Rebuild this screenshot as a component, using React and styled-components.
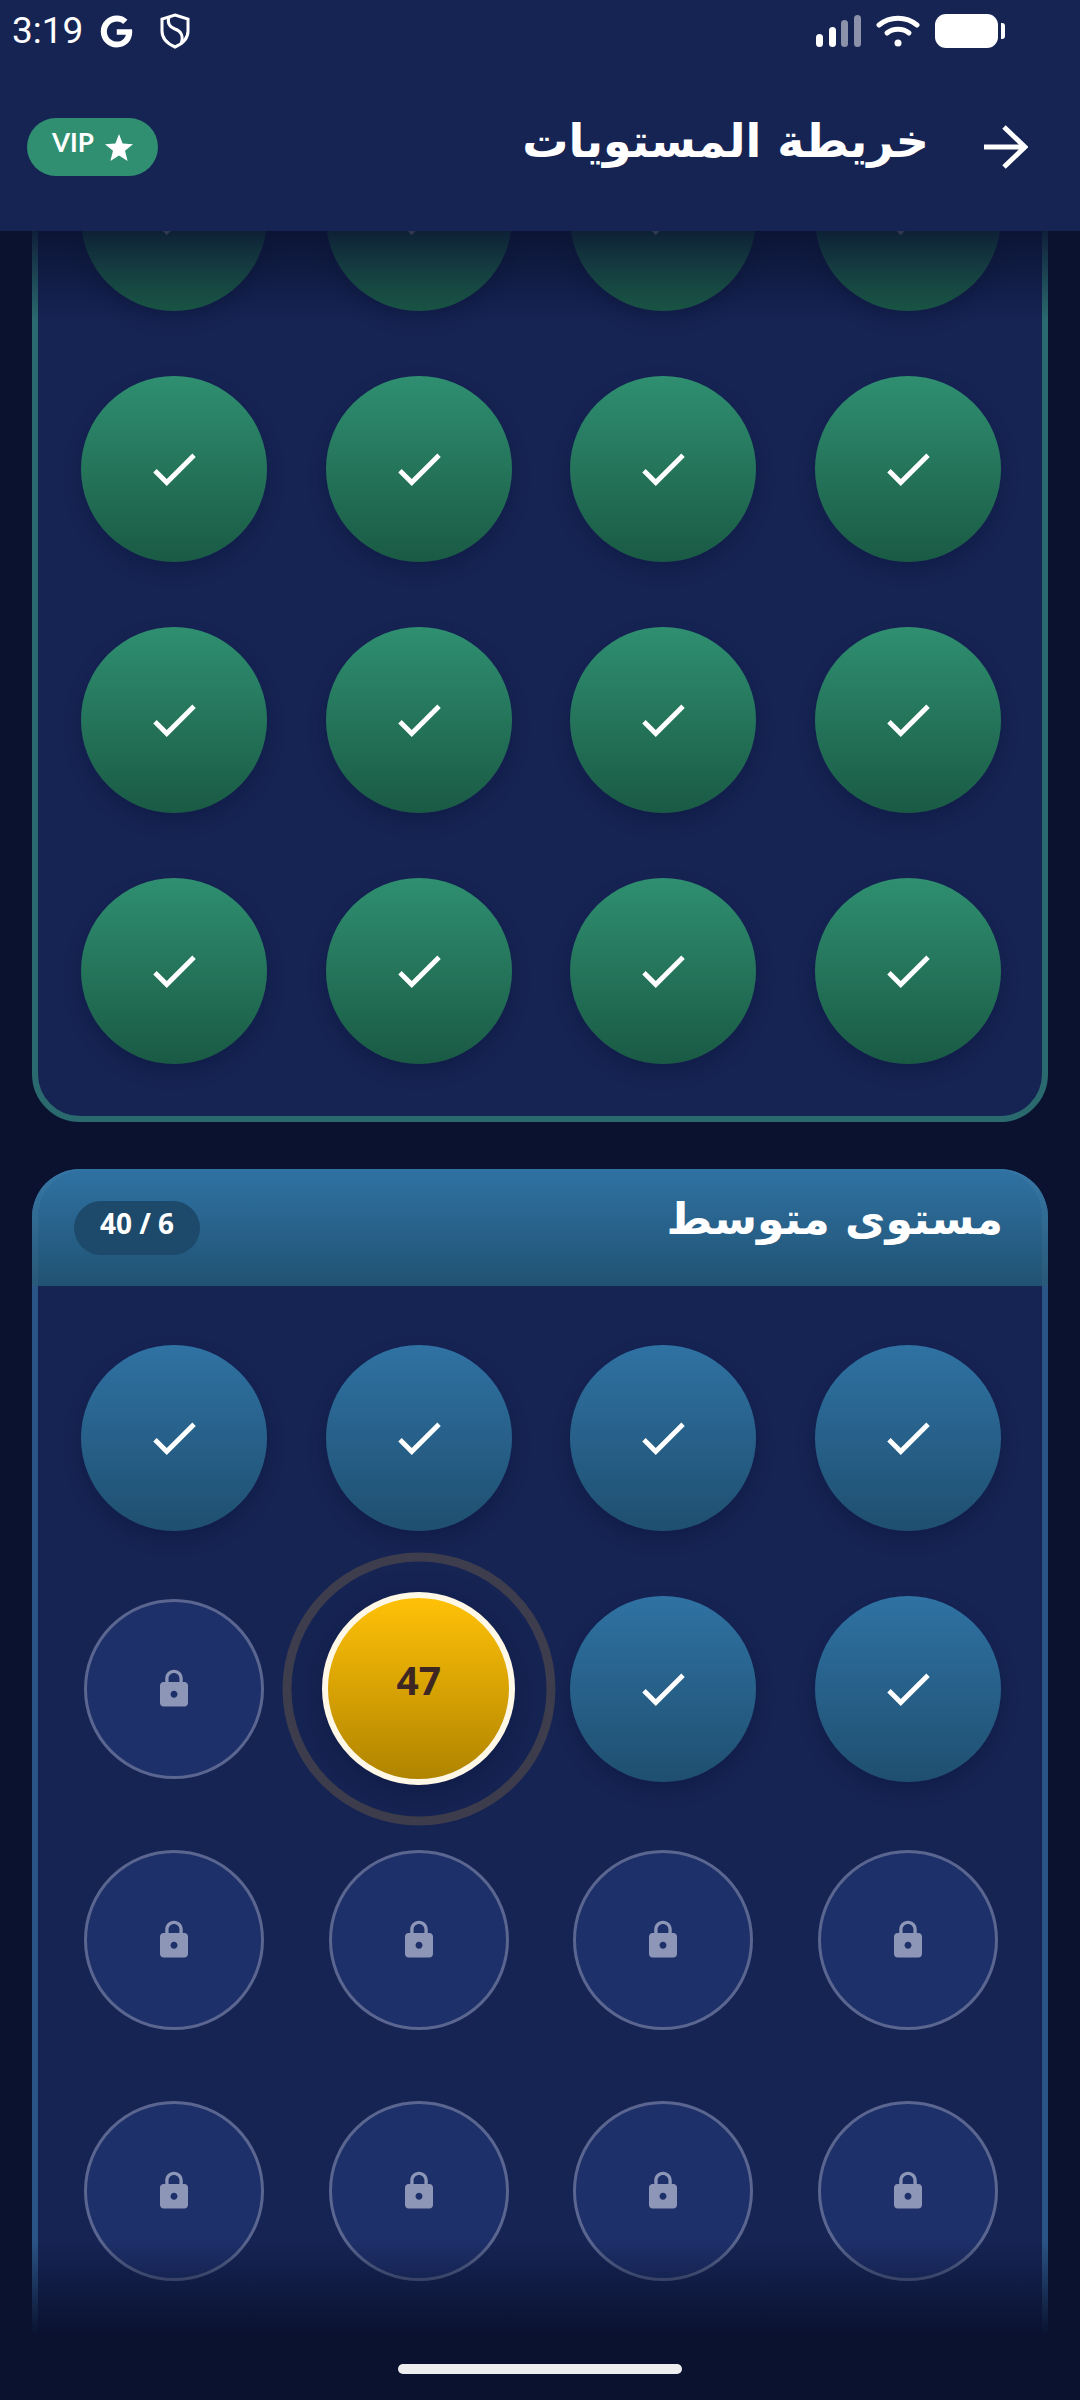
import React from 'react';
import styled, { createGlobalStyle } from 'styled-components';
import { FaGoogle } from 'react-icons/fa';

const GlobalStyle = createGlobalStyle`
  html, body { margin: 0; padding: 0; background: #0a1230; }
  body { font-family: "Noto Sans", "DejaVu Sans", sans-serif; }
`;

const Screen = styled.div`
  position: relative;
  width: 1080px;
  height: 2400px;
  overflow: hidden;
  background: #0a1230;
  display: flex;
  flex-direction: column;
`;

const TopBar = styled.header`
  position: relative;
  z-index: 3;
  flex: none;
  height: 231px;
  background: #162454;
`;

const StatusBar = styled.div`
  height: 62px;
  display: flex;
  align-items: center;
  padding: 0 75px 0 12px;
  color: #fff;
`;

const Time = styled.span`
  font-family: Roboto, sans-serif;
  font-size: 37px;
  line-height: 62px;
  width: 70px;
`;

const StatusLeft = styled.div`
  display: flex;
  align-items: center;
  gap: 18px;
  flex: 1;
`;

const StatusRight = styled.div`
  display: flex;
  align-items: center;
  gap: 15px;
`;

const Bars = styled.div`
  display: flex;
  align-items: flex-end;
  gap: 5.7px;
  height: 32px;
`;

const Bar = styled.span`
  width: 7px;
  height: ${p => p.$h}px;
  border-radius: 4px;
  background: ${p => p.$dim ? 'rgba(255,255,255,.5)' : '#fff'};
`;

const Battery = styled.div`
  position: relative;
  width: 63px;
  height: 34px;
  border-radius: 11px;
  background: #fff;
  margin-right: 7px;
  &::after {
    content: '';
    position: absolute;
    right: -7px;
    top: 9px;
    width: 4px;
    height: 16px;
    border-radius: 0 3px 3px 0;
    background: #fff;
  }
`;

const TitleRow = styled.div`
  height: 116px;
  margin-top: 27px;
  display: flex;
  align-items: center;
  padding: 0 52px 0 27px;
`;

const VipBadge = styled.div`
  width: 131px;
  height: 58px;
  border-radius: 29px;
  background: #2f8f70;
  color: #fff;
  display: flex;
  align-items: center;
  justify-content: center;
  gap: 11px;
  font-family: Lato, sans-serif;
  font-size: 26px;
  font-weight: 700;
`;

const VipText = styled.span`
  margin-bottom: 10px;
`;

const Title = styled.h1`
  flex: 1;
  margin: 0 55px 12px 0;
  text-align: right;
  color: #fff;
  font-size: 46px;
  font-weight: 700;
  font-family: "DejaVu Sans", "Noto Sans", sans-serif;
  direction: rtl;
`;

const List = styled.main`
  position: relative;
  z-index: 1;
  flex: 1;
  margin-top: -145px;
  padding: 0 32px;
  display: flex;
  flex-direction: column;
  gap: 47px;
`;

const Card = styled.section`
  border: 6px solid ${p => p.$border};
  border-radius: 48px;
  background: #162454;
  box-sizing: border-box;
  flex: none;
  ${p => p.$open ? 'border-bottom: 0; border-radius: 48px 48px 0 0;' : ''}
`;

const CardHead = styled.div`
  margin: -6px -6px 0;
  height: 117px;
  padding: 0 45px 0 42px;
  box-sizing: border-box;
  display: flex;
  align-items: center;
  justify-content: space-between;
  border-radius: 48px 48px 0 0;
  background: linear-gradient(180deg, #2f72a3, #215273);
  box-shadow: inset 6px 0 0 rgba(255,255,255,.04), inset -6px 0 0 rgba(255,255,255,.04);
`;

const CountPill = styled.div`
  width: 126px;
  height: 54px;
  border-radius: 27px;
  background: #1d4a6b;
  color: #fff;
  font-size: 28px;
  font-weight: 700;
  display: flex;
  align-items: center;
  justify-content: center;
  padding-bottom: 10px;
  box-sizing: border-box;
`;

const CardTitle = styled.h2`
  margin: 0 0 18px;
  color: #fff;
  font-size: 44px;
  font-weight: 700;
  font-family: "DejaVu Sans", "Noto Sans", sans-serif;
  direction: rtl;
`;

const Grid = styled.div`
  display: grid;
  grid-template-columns: repeat(4, 244.5px);
  grid-auto-rows: 251px;
  padding: ${p => p.$top}px 12px ${p => p.$bottom}px 14px;
`;

const Cell = styled.div`
  position: relative;
  display: flex;
  align-items: center;
  justify-content: center;
`;

const DoneCircle = styled.div`
  width: 186px;
  height: 186px;
  border-radius: 50%;
  display: flex;
  align-items: center;
  justify-content: center;
  background: linear-gradient(180deg, ${p => p.$from}, ${p => p.$to});
  box-shadow: 0 8px 18px rgba(8, 14, 44, .3);
`;

const LockCircle = styled.div`
  width: 180px;
  height: 180px;
  box-sizing: border-box;
  border-radius: 50%;
  display: flex;
  align-items: center;
  justify-content: center;
  background: #1e306a;
  border: 3px solid #5a668f;
`;

const Ring = styled.div`
  position: absolute;
  left: 50%;
  top: 50%;
  width: 273px;
  height: 273px;
  box-sizing: border-box;
  transform: translate(-50%, -50%);
  border-radius: 50%;
  border: 9px solid #3d3d4d;
`;

const CurrentCircle = styled.div`
  position: relative;
  width: 193px;
  height: 193px;
  box-sizing: border-box;
  border-radius: 50%;
  border: 6px solid #fff8e7;
  background: linear-gradient(180deg, #ffc107, #b08400);
  box-shadow: 0 10px 30px rgba(8, 14, 44, .35);
  display: flex;
  align-items: center;
  justify-content: center;
  color: #3e2723;
  font-size: 39px;
  font-weight: 700;
  padding-bottom: 18px;
`;

const FadeTop = styled.div`
  position: absolute;
  z-index: 2;
  left: 0;
  right: 0;
  top: 231px;
  height: 90px;
  background: linear-gradient(180deg, rgba(10,18,48,.85), rgba(10,18,48,0));
`;

const FadeBottom = styled.div`
  position: absolute;
  z-index: 2;
  left: 0;
  right: 0;
  bottom: 0;
  height: 160px;
  background: linear-gradient(180deg, rgba(10,18,48,0), #0a1230 59%);
`;

const HomeBar = styled.div`
  position: absolute;
  z-index: 4;
  left: 398px;
  bottom: 26px;
  width: 284px;
  height: 10px;
  border-radius: 5px;
  background: #eeeef0;
`;

const ShieldSvg = styled.svg`
  margin-left: 9px;
`;

const CheckIcon = () => (
  <svg width="58" height="58" viewBox="0 0 24 24" fill="#fff">
    <path d="M9 16.17 4.83 12l-1.41 1.41L9 19 21 7l-1.41-1.41z" />
  </svg>
);

const LockIcon = () => (
  <svg width="42" height="42" viewBox="0 0 24 24" fill="#8d96b6">
    <path d="M18 8h-1V6c0-2.76-2.24-5-5-5S7 3.24 7 6v2H6c-1.1 0-2 .9-2 2v10c0 1.1.9 2 2 2h12c1.1 0 2-.9 2-2V10c0-1.1-.9-2-2-2zm-6 9c-1.1 0-2-.9-2-2s.9-2 2-2 2 .9 2 2-.9 2-2 2zm3.1-9H8.9V6c0-1.71 1.39-3.1 3.1-3.1 1.71 0 3.1 1.39 3.1 3.1v2z" />
  </svg>
);

const StarIcon = () => (
  <svg width="28" height="27" viewBox="0 0 28 27" fill="#fff">
    <polygon points="14,0 17.6,9.6 28,10.2 20,16.8 22.6,27 14,21.4 5.4,27 8,16.8 0,10.2 10.4,9.6" />
  </svg>
);

const ArrowIcon = () => (
  <svg width="44" height="44" viewBox="0 0 44 44" fill="none" stroke="#fff" strokeWidth="5">
    <path d="M0 22h40" />
    <path d="M20 2l21 20-21 20" />
  </svg>
);

const ShieldIcon = () => (
  <ShieldSvg width="30" height="36" viewBox="0 0 30 36" fill="none" stroke="#fff" strokeWidth="3">
    <path d="M15 2 28 6v12c0 8-6 13-13 16C8 31 2 26 2 18V6z" />
    <path d="M9 4c-2 6 1 10 6 12 6 2 9 7 6 15" />
  </ShieldSvg>
);

const WifiIcon = () => (
  <svg width="44" height="32" viewBox="0 0 44 32" fill="none" stroke="#fff" strokeWidth="5" strokeLinecap="round">
    <path d="M3 10c11-9 27-9 38 0" />
    <path d="M11 18c6-5 16-5 22 0" />
    <circle cx="22" cy="28" r="3.5" fill="#fff" stroke="none" />
  </svg>
);

const Done = ({ from, to }) => (
  <Cell>
    <DoneCircle $from={from} $to={to}><CheckIcon /></DoneCircle>
  </Cell>
);

const Locked = () => (
  <Cell>
    <LockCircle><LockIcon /></LockCircle>
  </Cell>
);

const green = { from: '#2f8f70', to: '#1a5a45' };
const blue = { from: '#2f72a3', to: '#1f4f70' };

export default function App() {
  return (
    <Screen>
      <GlobalStyle />
      <TopBar>
        <StatusBar>
          <StatusLeft>
            <Time>3:19</Time>
            <FaGoogle size={33} />
            <ShieldIcon />
          </StatusLeft>
          <StatusRight>
            <Bars>
              <Bar $h={13} />
              <Bar $h={20} />
              <Bar $h={27} $dim />
              <Bar $h={32} $dim />
            </Bars>
            <WifiIcon />
            <Battery />
          </StatusRight>
        </StatusBar>
        <TitleRow>
          <VipBadge><VipText>VIP</VipText><StarIcon /></VipBadge>
          <Title>خريطة المستويات</Title>
          <ArrowIcon />
        </TitleRow>
      </TopBar>

      <List>
        <Card $border="#2a6a6e">
          <Grid $top={0} $bottom={20}>
            {Array.from({ length: 16 }).map((_, i) => <Done key={i} {...green} />)}
          </Grid>
        </Card>

        <Card $border="#2a5485" $open>
          <CardHead>
            <CountPill>40 / 6</CountPill>
            <CardTitle>مستوى متوسط</CardTitle>
          </CardHead>
          <Grid $top={26} $bottom={100}>
            {Array.from({ length: 4 }).map((_, i) => <Done key={i} {...blue} />)}
            <Locked />
            <Cell>
              <Ring />
              <CurrentCircle>47</CurrentCircle>
            </Cell>
            <Done {...blue} />
            <Done {...blue} />
            {Array.from({ length: 8 }).map((_, i) => <Locked key={i} />)}
          </Grid>
        </Card>
      </List>

      <FadeTop />
      <FadeBottom />
      <HomeBar />
    </Screen>
  );
}
